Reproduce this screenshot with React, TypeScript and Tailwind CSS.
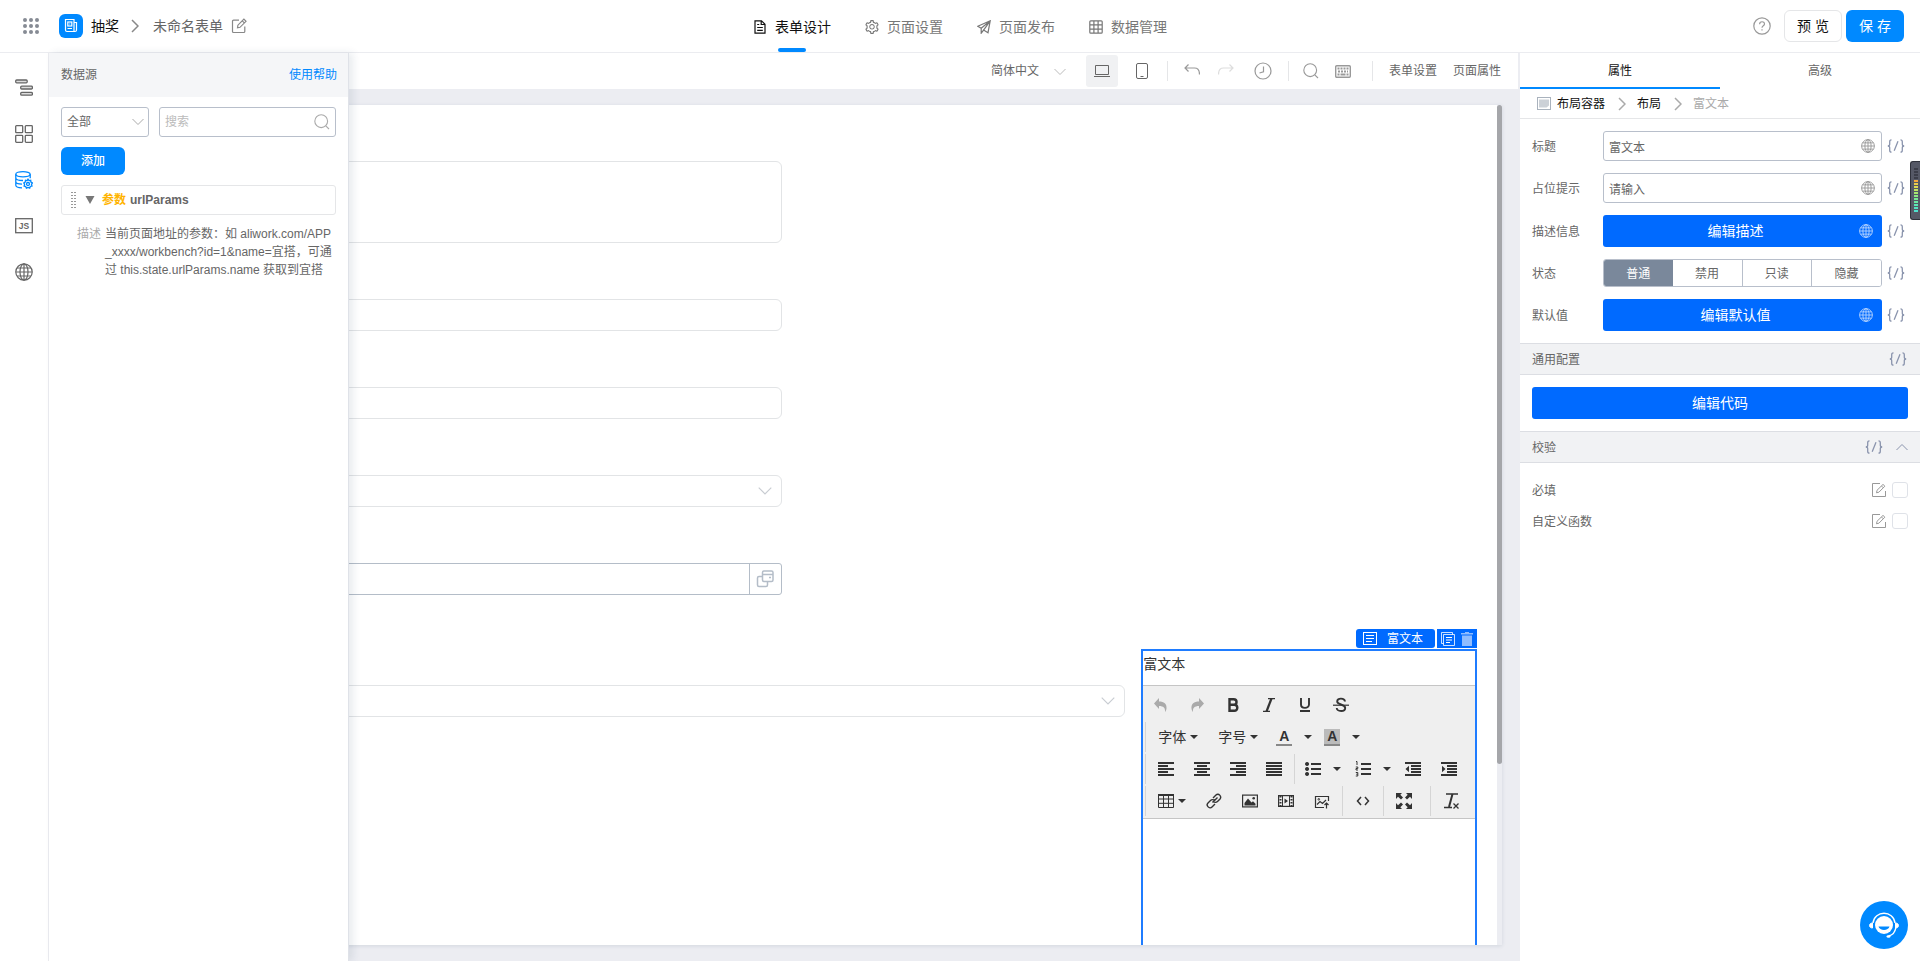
import type { ReactNode } from "react";
import clsx from "clsx";
import { AiOutlineSetting } from "react-icons/ai";

type IconProps = { className?: string };

const ChevronDown = ({ className }: IconProps) => (
  <svg className={className} viewBox="0 0 14 14" fill="none" stroke="currentColor">
    <path d="M1.5 4 7 9.5 12.5 4" />
  </svg>
);

const ChevronRight = ({ className }: IconProps) => (
  <svg className={className} viewBox="0 0 8 14" fill="none" stroke="currentColor" strokeWidth="1.5">
    <path d="M1 1 7 7 1 13" />
  </svg>
);

const Globe = ({ className }: IconProps) => (
  <svg className={className} viewBox="0 0 18 18" fill="none" stroke="currentColor" strokeWidth="1.2">
    <circle cx="9" cy="9" r="8.2" />
    <ellipse cx="9" cy="9" rx="4" ry="8.2" />
    <path d="M9 .8v16.4M.8 9h16.4M2 5h14M2 13h14" />
  </svg>
);

const SearchIcon = ({ className }: IconProps) => (
  <svg className={className} viewBox="0 0 16 16" fill="none" stroke="currentColor" strokeWidth="1.1">
    <circle cx="7.2" cy="7.2" r="6.4" />
    <path d="m11.8 11.8 3.200 3.200" />
  </svg>
);

const EditIcon = ({ className }: IconProps) => (
  <svg className={className} viewBox="0 0 14 14" fill="none" stroke="currentColor">
    <path d="M8 .5H.5v13h13V8" />
    <path d="M4.5 9.8 5 7.3 11 1.4l1.900 1.800-6 6zM9.500 3l1.800 1.800" />
  </svg>
);

const FormBlock = ({ className }: IconProps) => (
  <svg className={className} viewBox="0 0 14 13" fill="none" stroke="currentColor">
    <rect x=".5" y=".5" width="13" height="12" />
    <path d="M3 3.500h8M3 6.500h8M3 9.500h6" />
  </svg>
);

const BindIcon = () => (
  <button type="button" aria-label="绑定变量" className="shrink-0 text-[#8a94ad]">
    <svg className="h-3.5 w-[18px]" viewBox="0 0 18 14" fill="none" stroke="currentColor" strokeWidth="1.3">
      <path d="M4.500.8C3 .8 2.700 1.500 2.700 2.800v2.400C2.700 6.300 2.200 7 .8 7c1.400 0 1.900.7 1.900 1.800v2.400c0 1.300.3 2 1.800 2M13.500.8c1.500 0 1.800.7 1.800 2v2.400c0 1.100.5 1.800 1.900 1.800-1.400 0-1.900.7-1.900 1.800v2.400c0 1.300-.3 2-1.800 2M11 2.200l-3.800 9.600" />
    </svg>
  </button>
);

const TABS = [
  {
    label: "表单设计",
    icon: (
      <>
        <path d="M2 .8h6.500L12 4.200v9H2zM8.200 1v3.500H12" />
        <path d="M4.200 4.500h2M4.200 7.500h5.600M4.200 10.300h5.600" />
      </>
    ),
  },
  { label: "页面设置", icon: null },
  {
    label: "页面发布",
    icon: <path d="M13.200.8.800 6.200l3.400 2.100zM13.200.8l-9 7.500v4.900l2.400-3.100 4.400 2.600zM6.600 10.100l6.600-9.300" />,
  },
  {
    label: "数据管理",
    icon: (
      <>
        <rect x=".8" y=".8" width="12.400" height="12.400" rx="1" />
        <path d="M1 4.900h12M1 9.100h12M4.900 1v12M9.100 1v12" />
      </>
    ),
  },
];

const Header = () => (
  <header className="flex h-[53px] shrink-0 items-center justify-between border-b border-[#ebecf0] bg-white px-4">
    <div className="flex flex-1 items-center">
      <button type="button" aria-label="应用" className="ml-1.5 text-[#868b94]">
        <svg className="size-[18px]" viewBox="0 0 18 18" fill="currentColor">
          {[3, 9, 15].map((y) => [3, 9, 15].map((x) => <circle key={`${x}-${y}`} cx={x} cy={y} r="2" />))}
        </svg>
      </button>
      <span className="ml-[19px] flex size-6 items-center justify-center rounded-md bg-[#0089ff] text-white">
        <svg className="size-4" viewBox="0 0 16 16" fill="none" stroke="currentColor" strokeWidth="1.200">
          <path d="M2.500 1.500h8.500v12H4a1.500 1.500 0 0 1-1.500-1.500zM11 4.500h2.500v7.500a1.500 1.500 0 0 1-1.500 1.500h-1" />
          <rect x="4.800" y="4" width="4" height="4" />
          <path d="M6.300 6h1M4.500 10.500h4.500" />
        </svg>
      </span>
      <a href="#" className="ml-2 text-sm text-[#111]">抽奖</a>
      <ChevronRight className="ml-3 h-3.5 w-2 text-[#888]" />
      <span className="ml-3.5 text-sm text-[#666]">未命名表单</span>
      <button type="button" aria-label="重命名" className="ml-2 text-[#888]">
        <svg className="size-4" viewBox="0 0 16 16" fill="none" stroke="currentColor" strokeWidth="1.200">
          <path d="M8 2.200H2.500a1 1 0 0 0-1 1v10.300a1 1 0 0 0 1 1h10.300a1 1 0 0 0 1-1V8.500" />
          <path d="m6.500 9.800.4-2.600 6-6 2.100 2.100-6 6zM11.300 2.900l2 2" />
        </svg>
      </button>
    </div>
    <nav className="flex h-full">
      {TABS.map((tab, i) => (
        <a
          key={tab.label}
          href="#"
          className={clsx(
            "relative flex w-28 items-center justify-center gap-2 pt-0.5 text-sm",
            i === 0 ? "text-[#111]" : "text-[#777]",
          )}
        >
          {tab.icon ? (
            <svg className="size-3.5" viewBox="0 0 14 14" fill="none" stroke="currentColor" strokeWidth="1.200">
              {tab.icon}
            </svg>
          ) : (
            <AiOutlineSetting className="-mx-px size-4" />
          )}
          {tab.label}
          {i === 0 && (
            <span className="absolute bottom-0 left-1/2 h-1 w-7 -translate-x-1/2 rounded-sm bg-[#0089ff]" />
          )}
        </a>
      ))}
    </nav>
    <div className="flex flex-1 items-center justify-end">
      <button type="button" aria-label="帮助" className="mr-[13px] text-[#999]">
        <svg className="size-[18px]" viewBox="0 0 18 18" fill="none" stroke="currentColor" strokeWidth="1.200">
          <circle cx="9" cy="9" r="8.200" />
          <path d="M6.600 7.200c0-3.200 4.900-3.200 4.900-.2 0 1.800-2.500 1.800-2.500 3.800M9 12.200v1.300" />
        </svg>
      </button>
      <button type="button" className="mr-1 h-8 w-[58px] rounded-md border border-[#e5e6e8] text-sm text-[#111]">
        预 览
      </button>
      <button type="button" className="h-8 w-[58px] rounded-md bg-[#0089ff] text-sm text-white">
        保 存
      </button>
    </div>
  </header>
);

const NAV = [
  {
    label: "大纲树",
    icon: (
      <g fill="#ddd">
        <rect x=".7" y="1" width="11.500" height="2.800" rx="1" />
        <rect x="5.700" y="7.200" width="11.700" height="2.800" rx="1" />
        <rect x="5.700" y="13.400" width="11.700" height="2.800" rx="1" />
      </g>
    ),
  },
  {
    label: "组件库",
    icon: (
      <>
        <rect x=".7" y=".7" width="7" height="7" rx=".8" />
        <rect x="10.300" y=".7" width="7" height="7" rx=".8" />
        <rect x=".7" y="10.300" width="7" height="7" rx=".8" />
        <rect x="10.300" y="10.300" width="7" height="7" rx=".8" />
      </>
    ),
  },
  {
    label: "数据源",
    icon: (
      <>
        <ellipse cx="8" cy="3.300" rx="7.200" ry="2.600" />
        <path d="M.8 3.300v11c0 1.300 3 2.500 6.200 2.600M15.200 3.300v4M.8 7c0 1.500 3.200 2.500 7.200 2.500M.8 10.700c0 1.400 2.700 2.300 6.200 2.500" />
        <path d="m13 8.200 1 1.400 1.700-.3.200 1.700 1.500.9-.9 1.500.5 1.600-1.700.5-.6 1.600-1.700-.6-1.600.7-.7-1.600-1.600-.6.500-1.600-.8-1.500 1.400-.9.300-1.700 1.700.3z" />
        <circle cx="13" cy="13" r="1.500" />
      </>
    ),
  },
  {
    label: "动作面板",
    icon: (
      <>
        <rect x=".7" y="1.700" width="16.600" height="14" />
        <text x="9" y="12" textAnchor="middle" fontSize="8.500" fontWeight="bold" fill="currentColor" stroke="none">
          JS
        </text>
      </>
    ),
  },
  { label: "多语言", icon: null },
];

const SideNav = () => (
  <nav className="flex w-[49px] shrink-0 flex-col border-r border-[#ebecf0] bg-white pt-3">
    {NAV.map((item) => (
      <button
        key={item.label}
        type="button"
        aria-label={item.label}
        className={clsx(
          "flex h-[46px] items-center justify-center",
          item.label === "数据源" ? "text-[#0089ff]" : "text-[#666]",
        )}
      >
        {item.icon ? (
          <svg className="size-[18px]" viewBox="0 0 18 18" fill="none" stroke="currentColor" strokeWidth="1.300">
            {item.icon}
          </svg>
        ) : (
          <Globe className="size-[18px]" />
        )}
      </button>
    ))}
  </nav>
);

const DataSourcePanel = () => (
  <aside className="absolute inset-y-0 left-0 z-10 w-[300px] border-r border-[#dfe2e8] bg-white text-xs text-[#666] shadow-[4px_0_8px_rgba(31,56,88,0.1)]">
    <div className="flex h-11 items-center justify-between bg-[#f5f6f8] pr-[11px] pl-3">
      <h2>数据源</h2>
      <a href="#" className="text-[#0089ff]">使用帮助</a>
    </div>
    <div className="px-3 pt-2.5">
      <div className="flex gap-2.5">
        <div className="relative">
          <select
            aria-label="类型"
            className="block h-[30px] w-[88px] appearance-none rounded-[3px] border border-[#b8bfcb] px-[5px]"
          >
            <option>全部</option>
          </select>
          <ChevronDown className="pointer-events-none absolute top-2 right-1 size-3.5 text-[#aaa]" />
        </div>
        <div className="relative flex-1">
          <input
            type="text"
            aria-label="搜索"
            placeholder="搜索"
            className="block h-[30px] w-full rounded-[3px] border border-[#b8bfcb] px-[5px] placeholder:text-[#bbb]"
          />
          <SearchIcon className="pointer-events-none absolute top-[7px] right-1.5 size-4 text-[#aaa]" />
        </div>
      </div>
      <button type="button" className="mt-2.5 block h-7 w-16 rounded-md bg-[#0089ff] font-medium text-white">
        添加
      </button>
      <div className="mt-2.5 flex h-[30px] items-center rounded-[3px] border border-[#e5e6e8] font-bold">
        <svg className="ml-[9px] h-[17px] w-1.5 text-[#999]" viewBox="0 0 6 17" stroke="currentColor" strokeDasharray="2 1">
          <path d="M0 .5h6M0 3.500h6M0 6.500h6M0 9.500h6M0 12.500h6M0 15.500h6" />
        </svg>
        <svg className="ml-2 h-2 w-2.5 text-[#777]" viewBox="0 0 10 8" fill="currentColor">
          <path d="M.5 0h9L5 8z" />
        </svg>
        <span className="ml-[7px] text-[#ffb400]">参数</span>
        <span className="ml-1">urlParams</span>
      </div>
      <dl className="mt-2.5 flex gap-1 pl-4 leading-[18px]">
        <dt className="shrink-0 text-[#aaa]">描述</dt>
        <dd className="whitespace-nowrap">
          当前页面地址的参数：如 aliwork.com/APP
          <br />
          _xxxx/workbench?id=1&amp;name=宜搭，可通
          <br />过 this.state.urlParams.name 获取到宜搭
        </dd>
      </dl>
    </div>
  </aside>
);

const Divider = () => <span className="h-5 w-px bg-[#e5e6e8]" />;

const CanvasToolbar = () => (
  <div className="mr-0.5 flex h-9 shrink-0 items-center justify-end bg-white pr-[17px] text-xs text-[#666]">
    <div className="relative">
      <select aria-label="语言" className="block h-7 w-[78px] appearance-none">
        <option>简体中文</option>
      </select>
      <ChevronDown className="pointer-events-none absolute top-2 right-0.5 size-3.5 text-[#bbb]" />
    </div>
    <button type="button" aria-label="电脑" className="ml-[17px] flex size-8 items-center justify-center rounded-[3px] bg-[#f0f1f3]">
      <svg className="h-3.5 w-4" viewBox="0 0 16 14" fill="none" stroke="currentColor">
        <path d="M1.500 1.500h13v9h-13zM0 12.500h16" />
      </svg>
    </button>
    <button type="button" aria-label="手机" className="ml-2 flex size-8 items-center justify-center">
      <svg className="h-4 w-3" viewBox="0 0 12 16" fill="none" stroke="currentColor">
        <rect x=".5" y=".5" width="11" height="15" rx="1.500" />
        <path d="M4.500 13.500h3" />
      </svg>
    </button>
    <span className="mr-4 ml-[9px] flex">
      <Divider />
    </span>
    <div className="flex items-center gap-[18px] text-[#999]">
      <button type="button" aria-label="撤销">
        <svg className="size-4" viewBox="0 0 16 16" fill="none" stroke="currentColor" strokeWidth="1.200">
          <path d="M4.500 1.500 1 5l3.500 3.500M1 5h9.500q5 0 5 6.500" />
        </svg>
      </button>
      <button type="button" aria-label="重做" className="text-[#ddd]">
        <svg className="size-4" viewBox="0 0 16 16" fill="none" stroke="currentColor" strokeWidth="1.200">
          <path d="M11.500 1.500 15 5l-3.500 3.500M15 5H5.500q-5 0-5 6.500" />
        </svg>
      </button>
      <button type="button" aria-label="历史" className="ml-0.5">
        <svg className="size-[18px]" viewBox="0 0 18 18" fill="none" stroke="currentColor" strokeWidth="1.200">
          <circle cx="9" cy="9" r="8" />
          <path d="M9.500 4.500v5.200L5.500 11" />
        </svg>
      </button>
    </div>
    <span className="mr-3.5 ml-4 flex">
      <Divider />
    </span>
    <div className="flex items-center gap-4 text-[#999]">
      <button type="button" aria-label="查找">
        <SearchIcon className="size-4" />
      </button>
      <button type="button" aria-label="快捷键">
        <svg className="h-[13px] w-4" viewBox="0 0 16 13" fill="none" stroke="currentColor">
          <rect x=".7" y=".7" width="14.600" height="11.600" rx="1" strokeWidth="1.400" />
          <path d="M2.500 3.500h11M3 6.500h10" strokeDasharray="2 1" strokeWidth="2" />
          <path d="M2.500 9.500h2M5.500 9.500h5M11.500 9.500h2" strokeWidth="2" />
        </svg>
      </button>
    </div>
    <span className="mr-4 ml-[21px] flex">
      <Divider />
    </span>
    <button type="button">表单设置</button>
    <button type="button" className="ml-4">页面属性</button>
  </div>
);

const EditorSep = ({ className }: IconProps) => (
  <span className={clsx("mx-0.5 h-[30px] w-px bg-[#d5d5d5]", className)} />
);

const Caret = () => (
  <svg className="h-1 w-2" viewBox="0 0 8 4" fill="currentColor">
    <path d="M0 0h8L4 4z" />
  </svg>
);

type EditorButtonProps = { label: string; width?: string; className?: string; children: ReactNode };

const EditorButton = ({ label, width = "w-9", className, children }: EditorButtonProps) => (
  <button
    type="button"
    aria-label={label}
    className={clsx("flex h-[30px] shrink-0 items-center justify-center", width, className)}
  >
    {children}
  </button>
);

// icon on the left, menu arrow on the right
const SplitButton = ({ label, children }: { label: string; children: ReactNode }) => (
  <button type="button" aria-label={label} className="flex h-[30px] w-12 shrink-0 items-center">
    <span className="flex w-8 justify-center">{children}</span>
    <span className="flex w-4 justify-center">
      <Caret />
    </span>
  </button>
);

const Glyph = ({ children }: { children: ReactNode }) => (
  <svg className="size-4" viewBox="0 0 16 16" fill="none" stroke="currentColor">
    {children}
  </svg>
);

const ALIGN = [
  ["左对齐", "M0 2h16M0 5h10M0 8h16M0 11h10M0 14h16"],
  ["居中", "M0 2h16M3 5h10M0 8h16M3 11h10M0 14h16"],
  ["右对齐", "M0 2h16M6 5h10M0 8h16M6 11h10M0 14h16"],
  ["两端对齐", "M0 2h16M0 5h16M0 8h16M0 11h16M0 14h16"],
];

const RichTextToolbar = () => (
  <div className="border-y border-[#c5c5c5] bg-[#efefef] pt-[3px] pb-px text-[#333]">
    <div className="flex h-8 items-center">
      <EditorButton label="撤销" className="text-[#aaa]">
        <Glyph>
          <path d="M6 1v3.500c5 0 8 2.500 7.500 7-.2 2-1 3-1.500 3.500.5-4-1.500-6-6-6V12L1 6.500z" fill="currentColor" stroke="none" />
        </Glyph>
      </EditorButton>
      <EditorButton label="重做" className="text-[#aaa]">
        <Glyph>
          <path d="M10 1v3.500c-5 0-8 2.500-7.500 7 .2 2 1 3 1.500 3.500-.5-4 1.500-6 6-6V12l5-5.500z" fill="currentColor" stroke="none" />
        </Glyph>
      </EditorButton>
      <EditorButton label="粗体">
        <Glyph>
          <path d="M4.500 2.200h4.200c3.800 0 3.800 5.500 0 5.500H4.500zM4.500 7.700h4.800c4 0 4 6.100 0 6.100H4.500z" strokeWidth="2.400" />
        </Glyph>
      </EditorButton>
      <EditorButton label="斜体">
        <Glyph>
          <path d="M7 1.600h7M2 14.400h7" strokeWidth="1.200" />
          <path d="M10.500 1.500 5.500 14.500" strokeWidth="2.200" />
        </Glyph>
      </EditorButton>
      <EditorButton label="下划线">
        <Glyph>
          <path d="M4 1v6.500c0 4.500 8 4.500 8 0V1M3 14h10" strokeWidth="1.900" />
        </Glyph>
      </EditorButton>
      <EditorButton label="删除线">
        <Glyph>
          <path d="M12 4.500C11.500.5 4 .8 4.200 4.500c0 3.500 8 2.500 8 6.500 0 4-8 4-8.500 0" strokeWidth="1.900" />
          <path d="M0 8.200h16" strokeWidth="1.200" />
        </Glyph>
      </EditorButton>
    </div>
    <div className="flex h-8 items-center text-sm">
      <EditorSep />
      <button type="button" className="flex w-[60px] items-center gap-1 pl-2.5">
        字体
        <Caret />
      </button>
      <button type="button" className="flex w-[60px] items-center gap-1 pl-2.5">
        字号
        <Caret />
      </button>
      <SplitButton label="文字颜色">
        <span className="w-4 border-b-2 border-[#888] text-center leading-[15px] font-bold">A</span>
      </SplitButton>
      <SplitButton label="背景颜色">
        <span className="w-4 border-b-2 border-[#888] bg-[#bbb] text-center leading-[15px] font-bold">A</span>
      </SplitButton>
    </div>
    <div className="flex h-8 items-center">
      <EditorSep />
      {ALIGN.map(([label, d]) => (
        <EditorButton key={label} label={label}>
          <Glyph>
            <path d={d} strokeWidth="2" />
          </Glyph>
        </EditorButton>
      ))}
      <EditorSep />
      <SplitButton label="项目符号">
        <Glyph>
          <path d="M6 3h10M6 8h10M6 13h10" strokeWidth="2" />
          <path d="M2 1a2 2 0 1 0 .1 0M2 6a2 2 0 1 0 .1 0M2 11a2 2 0 1 0 .1 0" fill="currentColor" stroke="none" />
        </Glyph>
      </SplitButton>
      <span className="w-0.5" />
      <SplitButton label="编号列表">
        <Glyph>
          <path d="M6 3h10M6 8h10M6 13h10" strokeWidth="2" />
          <path d="M1 .5h1V4M.8 6h2v1.500H1V9h2M.8 11.500h2v3.500h-2M1.200 13.200h1.500" />
        </Glyph>
      </SplitButton>
      <EditorButton label="减少缩进">
        <Glyph>
          <path d="M0 2h16M6 5h10M6 8h10M6 11h10M0 14h16" strokeWidth="2" />
          <path d="M4 4.800v6.400L.5 8z" fill="currentColor" stroke="none" />
        </Glyph>
      </EditorButton>
      <EditorButton label="增加缩进">
        <Glyph>
          <path d="M0 2h16M6 5h10M6 8h10M6 11h10M0 14h16" strokeWidth="2" />
          <path d="M1 4.800v6.400L4.500 8z" fill="currentColor" stroke="none" />
        </Glyph>
      </EditorButton>
    </div>
    <div className="flex h-8 items-center">
      <EditorSep />
      <EditorButton label="表格" width="w-12" className="gap-1">
        <Glyph>
          <path d="M.5 1.500h15v13H.5zM.5 6h15M.5 10.300h15M5.500 2v12M10.500 2v12" />
          <path d="M0 2h16" strokeWidth="2" />
        </Glyph>
        <Caret />
      </EditorButton>
      <EditorButton label="链接">
        <Glyph>
          <path d="m6.500 9.500 5-5M7 5l3-3c2.500-2.500 6 1.500 4 4l-2.500 2.500c-1.300 1.300-3.500 1.300-4.500-.5M9 11l-3 3c-2.500 2.500-6.500-1.500-4-4l2.500-2.500C6 6 8 6.500 9 8" strokeWidth="1.400" />
        </Glyph>
      </EditorButton>
      <EditorButton label="图片">
        <Glyph>
          <rect x=".6" y="2.100" width="14.800" height="11.800" strokeWidth="1.200" />
          <path d="M2.500 12.500V10L6 5.500l3.500 4L11 8.300l2.500 2.500v1.700z" fill="currentColor" stroke="none" />
          <circle cx="11.700" cy="5.200" r="1.300" fill="currentColor" stroke="none" />
        </Glyph>
      </EditorButton>
      <EditorButton label="视频">
        <Glyph>
          <rect x=".6" y="2.600" width="14.800" height="10.800" strokeWidth="1.200" />
          <path d="M4.500 3v10M11.500 3v10" />
          <path d="M2.500 3v10M13.500 3v10" strokeDasharray="1.500 1.500" strokeWidth="2" />
          <path d="M6.500 5.500v5l3.500-2.500z" fill="currentColor" stroke="none" />
        </Glyph>
      </EditorButton>
      <EditorButton label="上传图片">
        <Glyph>
          <path d="M14.500 8V3.500h-13v11H10M3 11.500l3-3 2.500 2L12 7M12.500 15.500V10M10.500 12l2-2 2 2" strokeWidth="1.200" />
          <circle cx="4.800" cy="6.300" r=".8" />
        </Glyph>
      </EditorButton>
      <EditorSep />
      <EditorButton label="源代码">
        <Glyph>
          <path d="M6 4 2.500 8 6 12M10 4l3.500 4-3.500 4" strokeWidth="1.500" />
        </Glyph>
      </EditorButton>
      <EditorSep />
      <EditorButton label="全屏">
        <Glyph>
          <path d="M0 0h6L4.300 1.700 7 4.400 5 6.500 2 3.800 0 6zM16 0h-6l1.700 1.700L9 4.400l2 2.100 3-2.700L16 6zM0 16h6l-1.700-1.700L7 11.600 5 9.500l-3 2.700L0 10zM16 16h-6l1.700-1.700L9 11.600l2-2.100 3 2.700 2-2.200z" fill="currentColor" stroke="none" />
        </Glyph>
      </EditorButton>
      <span className="w-0.5" />
      <EditorSep className="ml-1.5" />
      <EditorButton label="清除格式">
        <Glyph>
          <path d="M3 1h12M1 14.500h8" strokeWidth="1.700" />
          <path d="M9.500 1 6 14" strokeWidth="2" />
          <path d="m10.500 10.500 5 5M15.500 10.500l-5 5" strokeWidth="1.300" />
        </Glyph>
      </EditorButton>
    </div>
  </div>
);

const RichTextBlock = () => (
  <section className="relative col-start-4 flex flex-col border-2 border-b-0 border-[#1f7cff] text-[#333]">
    <div className="absolute -right-0.5 bottom-full mb-[3px] flex h-[19px] gap-0.5 text-xs text-white">
      <span className="flex w-[79px] items-center gap-2.5 rounded-[3px] bg-[#006aff] pl-[7px]">
        <FormBlock className="h-[13px] w-3.5" />
        富文本
      </span>
      <span className="flex w-10 items-center justify-center gap-1.5 bg-[#006aff]">
        <button type="button" aria-label="复制">
          <svg className="size-3.5" viewBox="0 0 14 14" fill="none" stroke="currentColor">
            <path d="M2.500 11.500h-2V.5h11v2" strokeOpacity=".8" />
            <path d="M2.500 2.500h11v11h-11z" strokeOpacity=".8" />
            <path d="M5 5.500h6M5 8h6M5 10.500h4" />
          </svg>
        </button>
        <button type="button" aria-label="删除" className="text-[#8fbcff]">
          <svg className="h-3.5 w-3" viewBox="0 0 12 14" fill="currentColor">
            <path d="M4 0h4v1h4v1.500H0V1h4zM1 3.500h10V14H1z" />
          </svg>
        </button>
      </span>
    </div>
    <h3 className="h-[34px] pt-[3px] text-sm">富文本</h3>
    <RichTextToolbar />
  </section>
);

const FIELD = "block h-8 w-full rounded-md border border-[#e2e4e6] bg-white";

const Canvas = () => (
  <main className="flex min-w-0 flex-1 flex-col bg-[#ecedf2]">
    <CanvasToolbar />
    <div className="flex min-h-0 flex-1 py-4 pr-[18px] pl-4">
      <div className="flex min-w-0 flex-1 overflow-hidden bg-white shadow-[0_1px_4px_rgba(31,56,88,0.12)]">
        <form className="flex min-w-0 flex-1 flex-col pt-14 pr-5 pl-[21px]">
          <div className="flex w-1/2 flex-col gap-14">
            <textarea
              aria-label="多行文本"
              className="block h-[82px] w-full resize-none rounded-md border border-[#e2e4e6]"
            />
            <input type="text" aria-label="单行文本" className={FIELD} />
            <input type="text" aria-label="数值" className={FIELD} />
            <div className="relative">
              <select aria-label="下拉单选" className={clsx(FIELD, "appearance-none")} />
              <ChevronDown className="pointer-events-none absolute top-2 right-[9px] size-4 text-[#c8ccd2]" />
            </div>
            <div className="flex h-8 rounded-[3px] border border-[#b4bdc8]">
              <input type="text" aria-label="关联表单" className="min-w-0 flex-1" />
              <button
                type="button"
                aria-label="选择"
                className="flex w-8 items-center justify-center border-l border-[#b4bdc8] text-[#b4bdc8]"
              >
                <svg className="size-[18px]" viewBox="0 0 18 18" fill="none" stroke="currentColor" strokeWidth="1.500">
                  <rect x="6.500" y="1" width="10.500" height="10.500" rx="1.500" />
                  <path d="M6.500 4.500H17M6.500 6.500H3A1.500 1.500 0 0 0 1.500 8v7A1.500 1.500 0 0 0 3 16.500h7a1.500 1.500 0 0 0 1.500-1.500v-3.500M13 7.500h2" />
                </svg>
              </button>
            </div>
          </div>
          <div className="mt-[54px] grid flex-1 grid-cols-4 gap-x-4">
            <div className="relative col-span-3 mt-9">
              <select aria-label="级联选择" className={clsx(FIELD, "appearance-none")} />
              <ChevronDown className="pointer-events-none absolute top-2 right-[9px] size-4 text-[#c8ccd2]" />
            </div>
            <RichTextBlock />
          </div>
        </form>
        <div className="w-[5px] shrink-0 bg-[#ecedf2]">
          <div className="h-[78.5%] rounded-[3px] bg-[#a5a6aa]" />
        </div>
      </div>
    </div>
  </main>
);

type RowProps = { label: string; htmlFor?: string; children: ReactNode };

const Row = ({ label, htmlFor, children }: RowProps) => (
  <div className="flex items-center">
    <label htmlFor={htmlFor} className="w-[71px] shrink-0 pt-0.5">
      {label}
    </label>
    <div className="mr-[5px] min-w-0 flex-1">{children}</div>
    <BindIcon />
  </div>
);

const I18nInput = ({ id, value }: { id: string; value: string }) => (
  <div className="relative">
    <input
      id={id}
      type="text"
      defaultValue={value}
      className="block h-[30px] w-full rounded-[3px] border border-[#b8bfcb] pr-7 pl-[5px]"
    />
    <Globe className="absolute top-2 right-[7px] size-3.5 text-[#999]" />
  </div>
);

const EditButton = ({ id, children }: { id: string; children: ReactNode }) => (
  <button id={id} type="button" className="flex h-8 w-full items-center rounded-[3px] bg-[#006aff] px-[9px] text-sm text-white">
    <span className="flex-1">{children}</span>
    <Globe className="size-3.5 opacity-70" />
  </button>
);

const STATES = ["普通", "禁用", "只读", "隐藏"];
const RULES = ["必填", "自定义函数"];

const PropertyPanel = () => (
  <aside className="w-[400px] shrink-0 bg-white text-xs text-[#666]">
    <div className="flex h-9">
      <button type="button" className="flex-1 border-b-2 border-[#0089ff] pt-0.5 text-[#111]">属性</button>
      <button type="button" className="flex-1 border-b-2 border-transparent pt-0.5">高级</button>
    </div>
    <div className="flex h-[30px] items-center border-b border-[#e5e6e8] pl-[17px] text-[#111]">
      <svg className="h-[13px] w-3.5 text-[#a9b2bd]" viewBox="0 0 14 13" fill="none" stroke="currentColor">
        <rect x=".5" y=".5" width="13" height="12" />
        <path d="M2 2.500h10v6L9.500 10.500H2z" fill="#ccd1d7" stroke="none" />
      </svg>
      <a href="#" className="ml-1.5">布局容器</a>
      <ChevronRight className="ml-[13px] h-3.5 w-2 text-[#aaa]" />
      <a href="#" className="ml-[11px]">布局</a>
      <ChevronRight className="ml-[13px] h-3.5 w-2 text-[#aaa]" />
      <span className="ml-[11px] text-[#aaa]">富文本</span>
    </div>
    <div className="flex flex-col gap-3 py-3 pr-[15px] pl-3">
      <Row label="标题" htmlFor="title">
        <I18nInput id="title" value="富文本" />
      </Row>
      <Row label="占位提示" htmlFor="placeholder">
        <I18nInput id="placeholder" value="请输入" />
      </Row>
      <Row label="描述信息" htmlFor="desc">
        <EditButton id="desc">编辑描述</EditButton>
      </Row>
      <Row label="状态">
        <div className="flex h-7 overflow-hidden rounded-[3px] border border-[#b8bfcb]">
          {STATES.map((state, i) => (
            <button
              key={state}
              type="button"
              className={clsx(
                "flex-1 pt-0.5",
                i === 0 ? "bg-[#7a889b] text-white" : "bg-white",
                i > 1 && "border-l border-[#b8bfcb]",
              )}
            >
              {state}
            </button>
          ))}
        </div>
      </Row>
      <Row label="默认值" htmlFor="default">
        <EditButton id="default">编辑默认值</EditButton>
      </Row>
    </div>
    <div className="flex h-8 items-center justify-between border-y border-[#dcdee3] bg-[#f1f2f4] pr-[13px] pl-3">
      <h3 className="pt-0.5">通用配置</h3>
      <BindIcon />
    </div>
    <div className="p-3">
      <button type="button" className="block h-8 w-full rounded-[3px] bg-[#006aff] text-sm text-white">
        编辑代码
      </button>
    </div>
    <div className="flex h-8 items-center border-y border-[#dcdee3] bg-[#f1f2f4] pr-[11px] pl-3">
      <h3 className="flex-1 pt-0.5">校验</h3>
      <BindIcon />
      <button type="button" aria-label="收起" className="ml-3 text-[#8a94ad]">
        <ChevronDown className="size-3.5 rotate-180" />
      </button>
    </div>
    <ul className="px-3 pt-[11px]">
      {RULES.map((rule) => (
        <li key={rule} className="flex h-[31px] items-center">
          <label htmlFor={rule} className="flex-1 pt-0.5">
            {rule}
          </label>
          <button type="button" aria-label={`编辑${rule}`} className="mr-1.5 text-[#999]">
            <EditIcon className="size-3.5" />
          </button>
          <input id={rule} type="checkbox" className="size-4 appearance-none rounded-[3px] border border-[#dfe2e8]" />
        </li>
      ))}
    </ul>
  </aside>
);

// level meter bars, from idle to full
const METER = [
  "#3b3d49", "#3b3d49", "#3b3d49", "#3b3d49", "#f5a83c", "#e9cb4c", "#dcd853", "#c0e562",
  "#a8e870", "#8eea82", "#7aea94", "#6ae9a3", "#5be6b5", "#54e4c2", "#50e0ce",
];

export default function App() {
  return (
    <div className="flex h-screen flex-col overflow-hidden bg-white font-['Liberation_Sans','Noto_Sans_CJK_SC',sans-serif]">
      <Header />
      <div className="flex min-h-0 flex-1">
        <SideNav />
        <div className="relative flex min-w-0 flex-1">
          <DataSourcePanel />
          <Canvas />
        </div>
        <PropertyPanel />
      </div>
      <div className="fixed top-[161px] right-0 z-20 flex h-[59px] w-2.5 items-center justify-end rounded-l-[3px] border border-r-0 border-[#2f313b] bg-[#555866] pr-0.5">
        <svg className="h-[45px] w-1" viewBox="0 0 4 45">
          {METER.map((color, i) => (
            <rect key={i} y={i * 3} width="4" height="2" fill={color} />
          ))}
        </svg>
      </div>
      <button
        type="button"
        aria-label="在线客服"
        className="fixed right-3 bottom-3 z-20 flex size-12 items-center justify-center rounded-full bg-[#0089ff] text-white"
      >
        <svg className="size-8" viewBox="0 0 32 32" fill="none" stroke="currentColor">
          <path d="M5 14C6.500 1 25.500 1 27 14M28 18c-1 6-4 8.500-7.500 9" strokeWidth="1.400" />
          <circle cx="16" cy="16" r="9" fill="currentColor" stroke="none" />
          <path d="M10.500 17.500h11c-1 4.500-10 4.500-11 0" fill="#0089ff" stroke="none" />
          <path d="M4.500 14v5c-4 0-4-5 0-5M27.500 14v5c4 0 4-5 0-5" fill="currentColor" />
          <ellipse cx="20.500" cy="27.500" rx="2" ry="1.300" fill="currentColor" stroke="none" />
        </svg>
      </button>
    </div>
  );
}
